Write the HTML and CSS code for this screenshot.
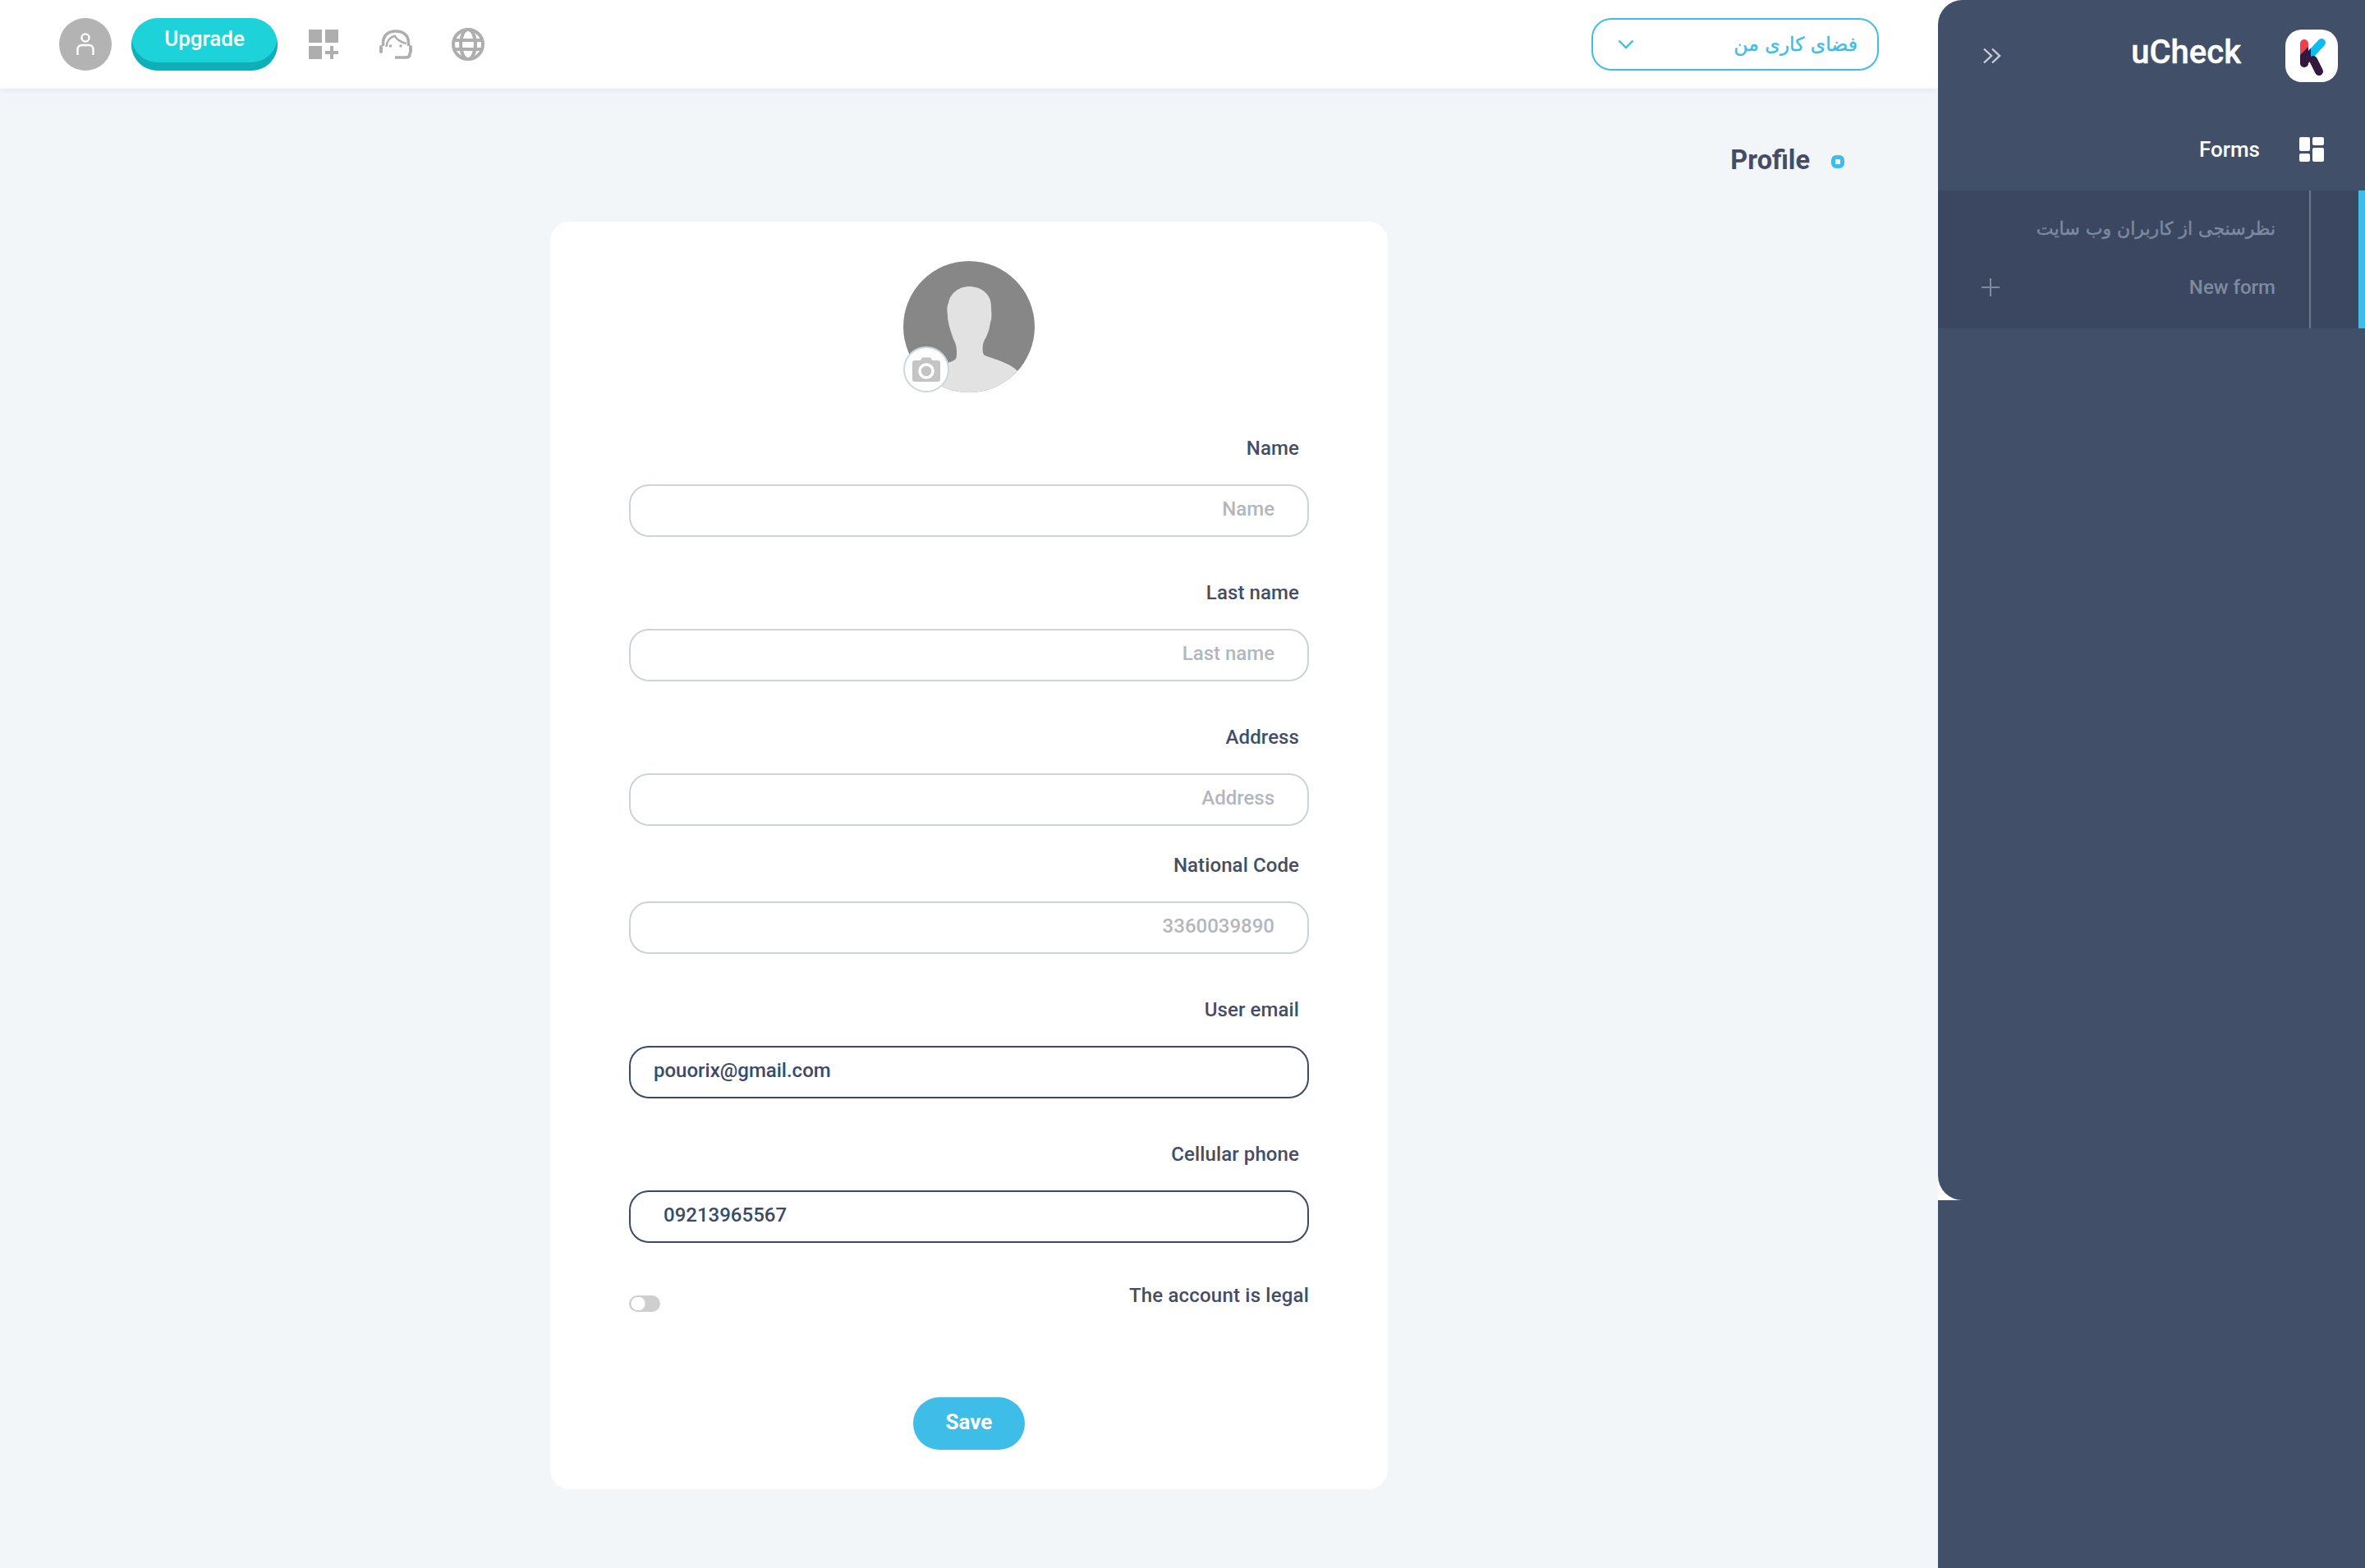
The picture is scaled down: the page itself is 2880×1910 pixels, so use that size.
FILE: index.html

```html
<!DOCTYPE html>
<html lang="en">
<head>
  <meta charset="UTF-8" />
  <title>uCheck Profile</title>
  <link rel="stylesheet" href="styles.css">
</head>
<body>
  <div class="main">
    <header class="topbar">
      <div class="top-left">
        <div class="user-btn">
          <svg width="22" height="28" viewBox="0 0 22 28" fill="none" stroke="#fff" stroke-width="2.4"><circle cx="11" cy="6" r="4.6"/><path d="M1.500 27v-7a5 5 0 0 1 5-5h9a5 5 0 0 1 5 5v7"/></svg>
        </div>
        <button class="upgrade">Upgrade</button>
        <div class="top-icons">
          <span class="icon-box">
            <svg width="36" height="36" viewBox="0 0 36 36" fill="#aeaeae"><rect width="16" height="16"/><rect x="20" width="16" height="16"/><rect y="20" width="16" height="16"/><path d="M26 20h4v6h6v4h-6v6h-4v-6h-6v-4h6z"/></svg>
          </span>
          <span class="icon-box">
            <svg width="42" height="38" viewBox="0 0 42 38" fill="none" stroke="#aeaeae" stroke-width="3.500"><path d="M5.500 21V17C5.500 8 12 3 21 3s15.500 5 15.500 14v4"/><path d="M9.500 22C10 15 14 10 20 9c2 4 8 8 14 9" stroke-width="2.500"/><rect x="1" y="20" width="4" height="10" rx="2" fill="#aeaeae" stroke="none"/><rect x="37" y="20" width="4" height="10" rx="2" fill="#aeaeae" stroke="none"/><path d="M38 29v2c0 3-2 4-5 4H20"/><circle cx="14.500" cy="21" r="1.800" fill="#aeaeae" stroke="none"/><circle cx="27" cy="21" r="1.800" fill="#aeaeae" stroke="none"/></svg>
          </span>
          <span class="icon-box">
            <svg width="40" height="40" viewBox="0 0 40 40" fill="none" stroke="#aeaeae" stroke-width="4"><circle cx="20" cy="20" r="18"/><ellipse cx="20" cy="20" rx="9" ry="18"/><path d="M4 15h32M4 26h32"/></svg>
          </span>
        </div>
      </div>
      <div class="workspace" dir="rtl">
        <span>فضای کاری من</span>
        <svg width="20" height="12" viewBox="0 0 20 12" fill="none" stroke="#3fbde9" stroke-width="2.400"><path d="M1.500 1.500L10 10l8.500-8.500"/></svg>
      </div>
    </header>

    <div class="page-title">
      <h1>Profile</h1>
      <span class="title-dot"></span>
    </div>

    <form class="card">
      <div class="avatar">
        <svg width="160" height="160" viewBox="0 0 160 160">
          <defs><clipPath id="avatarClip"><circle cx="80" cy="80" r="80"/></clipPath></defs>
          <circle cx="80" cy="80" r="80" fill="#878787"/>
          <path clip-path="url(#avatarClip)" fill="#e2e2e2" d="M80 31c16 0 27 10 27 24 0 6 1 10 0 17-1 2-1 4-2 9-2 7-4 12-6 15-2 4-3 9-2 15 0 3 2 4 5 5 18 6 35 12 40 22l10 30H20l8-32c5-4 10-6 20-10 6-2 13-4 15-6 2-2 2-4 2-10 0-7-2-11-4-15-2-6-5-14-6-20-1-4-1-6-1-9-1-6-1-11 1-15 2-11 12-20 25-20z"/>
        </svg>
        <span class="camera">
          <svg width="34" height="30" viewBox="0 0 34 30"><path fill="#c4c4c4" d="M3 4h7l2-3.500h10L24 4h7c2 0 3 1 3 3v20c0 2-1 3-3 3H3c-2 0-3-1-3-3V7c0-2 1-3 3-3z"/><circle cx="17" cy="17" r="8" fill="none" stroke="#fff" stroke-width="3.500"/></svg>
        </span>
      </div>

      <label class="field first">
        <span class="field-label">Name</span>
        <input type="text" placeholder="Name" />
      </label>
      <label class="field">
        <span class="field-label">Last name</span>
        <input type="text" placeholder="Last name" />
      </label>
      <label class="field">
        <span class="field-label">Address</span>
        <input type="text" placeholder="Address" />
      </label>
      <label class="field tight">
        <span class="field-label">National Code</span>
        <input type="text" placeholder="3360039890" />
      </label>
      <label class="field">
        <span class="field-label">User email</span>
        <input type="text" class="filled" value="pouorix@gmail.com" />
      </label>
      <label class="field">
        <span class="field-label">Cellular phone</span>
        <input type="text" class="filled phone" value="09213965567" />
      </label>

      <div class="legal-row">
        <span class="toggle"></span>
        <span class="legal-label">The account is legal</span>
      </div>

      <button type="button" class="save">Save</button>
    </form>
  </div>

  <aside class="sidebar">
    <div class="side-panel">
      <div class="brand">
        <svg class="chevrons" width="22" height="20" viewBox="0 0 22 20" fill="none" stroke="#c9ced8" stroke-width="2.400"><path d="M1 1.500l9 8.500-9 8.500M11 1.500l9 8.500-9 8.500"/></svg>
        <span class="brand-name">uCheck</span>
        <span class="logo">
          <svg width="64" height="64" viewBox="0 0 64 64" stroke-linecap="round" fill="none" stroke-width="10">
            <defs><clipPath id="logoClip"><polygon points="18,31 28,21 31,21 31,52 18,52"/></clipPath></defs>
            <path d="M23 17V41" stroke="#ef4050"/>
            <path d="M44 16L24 38" stroke="#0dbdf2"/>
            <g clip-path="url(#logoClip)">
              <path d="M23 17V41" stroke="#33183f"/>
              <path d="M44 16L24 38" stroke="#33183f"/>
            </g>
            <path d="M34 37L41 51" stroke="#33183f"/>
          </svg>
        </span>
      </div>
      <div class="section-head">
        <span>Forms</span>
        <svg width="30" height="30" viewBox="0 0 30 30" fill="#fff"><rect width="13" height="17" rx="2"/><rect y="20" width="13" height="10" rx="2"/><rect x="16" width="14" height="10" rx="2"/><rect x="16" y="13" width="14" height="17" rx="2"/></svg>
      </div>
      <div class="submenu">
        <div class="sub-list">
          <div class="sub-item sub-fa" dir="rtl">نظرسنجی از کاربران وب سایت</div>
          <div class="sub-item new-form">
            <svg width="22" height="22" viewBox="0 0 22 22" stroke="#7d8aa0" stroke-width="2"><path d="M11 0v22M0 11h22"/></svg>
            <span>New form</span>
          </div>
        </div>
        <div class="sub-rail"></div>
      </div>
    </div>
    <div class="side-foot"></div>
  </aside>
</body>
</html>
```

FILE: styles.css

```css
* { box-sizing: border-box; }
html, body { margin: 0; height: 100%; }
body { display: flex; width: 2880px; height: 1910px; overflow: hidden; font-family: Roboto, "DejaVu Sans", sans-serif; background: #fff; }

.main { width: 2360px; background: #f3f6f9; }
.topbar { height: 108px; padding: 22px 72px 0; display: flex; justify-content: space-between; align-items: flex-start; background: #fff; box-shadow: 0 2px 8px rgba(60, 70, 110, 0.08); }
.top-left { display: flex; align-items: center; }
.user-btn { width: 64px; height: 64px; border-radius: 50%; background: #b3b3b3; display: flex; align-items: center; justify-content: center; margin-right: 24px; }
.upgrade { width: 178px; height: 64px; padding: 0 0 14px; border: 0; border-radius: 32px; background: #1dd3d9; box-shadow: inset 0 -10px 0 #0db0b8; color: #fff; font: 500 26px Roboto, sans-serif; }
.top-icons { display: flex; gap: 40px; margin-left: 32px; }
.icon-box { width: 48px; height: 48px; display: flex; align-items: center; justify-content: center; }

.workspace { width: 350px; height: 64px; padding: 0 24px 0 30px; display: flex; align-items: center; justify-content: space-between; border: 2px solid #3fbde9; border-radius: 24px; color: #3fbde9; font: 400 23.500px "DejaVu Sans", sans-serif; -webkit-text-stroke: 0.4px #3fbde9; }

.page-title { display: flex; justify-content: flex-end; align-items: center; gap: 26px; height: 162px; padding: 12px 114px 0 0; }
.page-title h1 { margin: 0; font-size: 32.500px; font-weight: 700; color: #454d66; }
.title-dot { width: 16px; height: 16px; margin-top: 4px; border: 5px solid #3fbde9; border-radius: 6px; }

.card { width: 1020px; height: 1544px; margin: 0 auto; padding: 48px 96px 0; display: flex; flex-direction: column; background: #fff; border-radius: 24px; }
.avatar { position: relative; width: 160px; height: 160px; margin: 0 auto; }
.avatar svg { display: block; }
.camera { position: absolute; left: 0; bottom: 0; width: 56px; height: 56px; display: flex; align-items: center; justify-content: center; background: #fff; border: 2px solid #cdd5de; border-radius: 50%; }

.field { display: block; margin-top: 52px; }
.field.tight { margin-top: 32px; }
.field-label { display: block; height: 30px; padding-right: 12px; margin-bottom: 30px; text-align: right; font-size: 24px; line-height: 32px; font-weight: 500; letter-spacing: 0.1px; color: #454d66; }
.field input { display: block; width: 100%; height: 64px; padding: 0 40px 4px; border: 2px solid #cdd2d9; border-radius: 24px; outline: 0; text-align: right; background: #fff; font: 500 24px Roboto, sans-serif; color: #3c4a66; }
.field input::placeholder { color: #b3b7bd; opacity: 1; }
.field input.filled { text-align: left; padding-left: 28px; padding-bottom: 5px; border-color: #3c4a66; }
.field input.phone { padding-left: 40px; }

.legal-row { display: flex; justify-content: space-between; align-items: flex-start; margin-top: 49px; }
.toggle { width: 38px; height: 20px; margin-top: 15px; border: 2px solid #cfcfcf; border-radius: 10px; background: radial-gradient(circle at 9px 8px, #fff 8px, #cfcfcf 9px); }
.legal-label { font-size: 24px; line-height: 30px; font-weight: 500; letter-spacing: 0.2px; color: #454d66; }

.save { width: 136px; height: 64px; margin: 104px auto 0; padding: 0 0 4px; border: 0; border-radius: 32px; background: #3fbde9; color: #fff; font: 700 26px Roboto, sans-serif; }

.sidebar { width: 520px; background: #fff; }
.side-panel { height: 1462px; background: #414f68; border-radius: 30px 0 0 30px; }
.side-foot { height: 448px; background: #414f68; }
.brand { height: 136px; padding: 36px 33px 0 55px; display: flex; align-items: flex-start; }
.chevrons { margin-top: 22px; }
.brand-name { margin: 0 54px 0 auto; font-size: 40px; font-weight: 500; line-height: 56px; color: #fff; -webkit-text-stroke: 0.4px #fff; }
.logo { width: 64px; height: 64px; background: #fff; border-radius: 20px; }
.logo svg { display: block; }
.section-head { height: 96px; padding: 0 50px 5px 0; display: flex; justify-content: flex-end; align-items: center; gap: 48px; color: #fff; font-size: 26px; font-weight: 500; }
.submenu { height: 168px; display: flex; background: #3b4760; }
.sub-list { width: 454px; border-right: 2px solid #6c7789; padding: 0 41px 0 53px; }
.sub-item { height: 72px; display: flex; align-items: center; color: #7d8aa0; font-size: 24px; font-weight: 500; }
.sub-item:first-child { margin-top: 10px; }
.sub-fa { font: 400 22px "DejaVu Sans", sans-serif; -webkit-text-stroke: 0.4px #7d8aa0; }
.new-form { justify-content: space-between; }
.sub-rail { flex: 1; display: flex; justify-content: flex-end; }
.sub-rail::after { content: ""; width: 8px; background: #3fbde9; }
```
